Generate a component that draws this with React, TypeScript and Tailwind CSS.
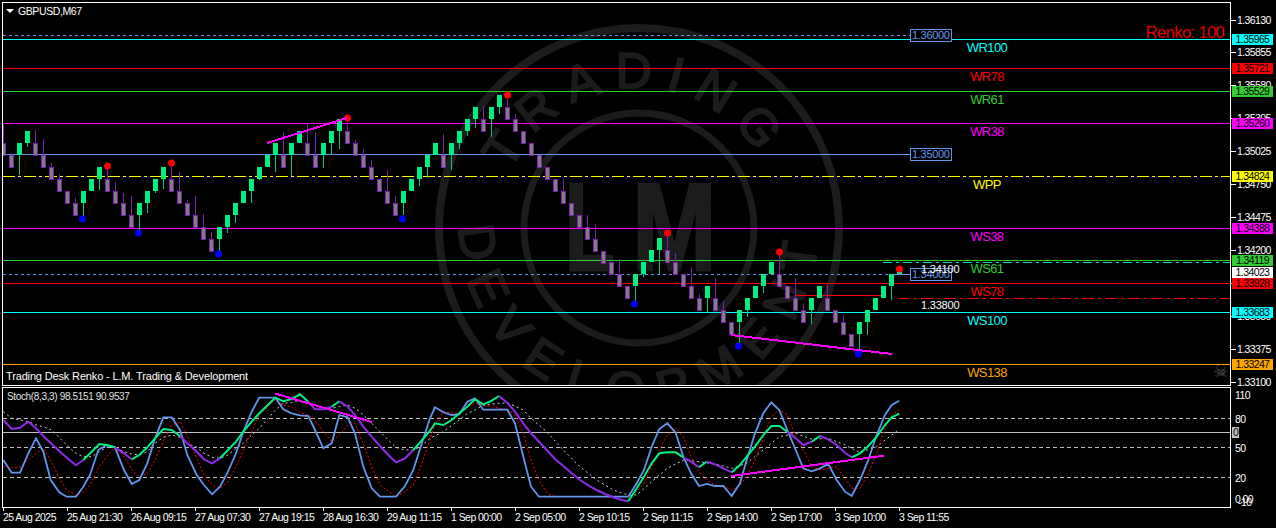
import React from "react";

const FONT = "font-['Liberation_Sans',Arial,sans-serif]";

// [kind, body top, wick end]
type Brick = ["g" | "x", number, number?];

const bricks: Brick[] = [
  ["x", 143, 123], ["x", 155, 153], ["g", 143, 175], ["g", 131, 147], ["x", 143, 130], ["x", 155, 139], ["x", 167, 163], ["x", 179, 174],
  ["x", 191], ["x", 203, 198], ["g", 191, 216], ["g", 179], ["g", 167, 190], ["x", 179, 166], ["x", 191, 182], ["x", 203, 193],
  ["x", 215, 196], ["g", 203, 230], ["g", 191, 213], ["g", 179, 193], ["g", 167, 189], ["x", 179, 163], ["x", 191, 172], ["x", 203, 200],
  ["x", 215, 196], ["x", 227, 214], ["x", 239, 232], ["g", 227, 252], ["g", 215, 233], ["g", 203, 223], ["g", 191], ["g", 179, 203],
  ["g", 167, 180], ["g", 155], ["g", 143, 172], ["x", 155, 132], ["g", 143, 176], ["g", 131], ["x", 143, 124], ["x", 155, 132],
  ["g", 143, 168], ["g", 131, 154], ["g", 119, 149], ["x", 131, 118], ["x", 143, 140], ["x", 155, 149], ["x", 167, 160], ["x", 179],
  ["x", 191, 170], ["x", 203, 196], ["g", 191, 215], ["g", 179], ["g", 167, 186], ["g", 155, 178], ["g", 143], ["x", 155, 134],
  ["g", 143, 170], ["g", 131, 149], ["g", 119, 136], ["g", 107, 128], ["x", 119, 106], ["g", 107, 137], ["g", 95, 114], ["x", 107, 95],
  ["x", 119, 114], ["x", 131], ["x", 143], ["x", 155], ["x", 167], ["x", 179], ["x", 191, 179], ["x", 203],
  ["x", 215], ["x", 227, 215], ["x", 239, 224], ["x", 251], ["x", 262], ["x", 274, 259], ["x", 286], ["g", 274, 301],
  ["g", 262, 277], ["g", 250], ["g", 238, 274], ["x", 250, 233], ["x", 262, 253], ["x", 274], ["x", 286, 267], ["x", 298, 294],
  ["g", 286, 312], ["x", 298, 278], ["x", 310, 301], ["x", 322], ["g", 310, 345], ["g", 298, 317], ["g", 286], ["g", 274, 293],
  ["g", 262], ["x", 274, 252], ["x", 286], ["x", 298, 278], ["x", 310, 304], ["g", 298, 324], ["g", 286], ["x", 298, 285],
  ["x", 310], ["x", 322, 315], ["x", 334], ["g", 322, 350], ["g", 310, 335], ["g", 298], ["g", 286], ["g", 274, 300],
];

const dots = [
  [107, 166, "#ff0000"], [171, 163, "#ff0000"], [347, 118, "#ff0000"], [507, 95, "#ff0000"], [667, 233, "#ff0000"], [779, 252, "#ff0000"], [899, 269, "#ff0000"],
  [82, 219, "#0000ff"], [138, 233, "#0000ff"], [218, 254, "#0000ff"], [402, 219, "#0000ff"], [634, 304, "#0000ff"], [738, 346, "#0000ff"], [858, 354, "#0000ff"],
] as const;

const levels = [
  { y: 39, color: "#00ffff", price: "1.35965", name: "WR100", ty: 52 },
  { y: 68, color: "#ff0000", price: "1.35721", name: "WR78", ty: 81 },
  { y: 91, color: "#32cd32", price: "1.35529", name: "WR61", ty: 104 },
  { y: 123, color: "#ff00ff", price: "1.35260", name: "WR38", ty: 136 },
  { y: 228, color: "#ff00ff", price: "1.34388", name: "WS38", ty: 241 },
  { y: 260, color: "#32cd32", price: "1.34119", name: "WS61", ty: 273 },
  { y: 283, color: "#ff0000", price: "1.33928", name: "WS78", ty: 296 },
  { y: 312, color: "#00ffff", price: "1.33683", name: "WS100", ty: 325 },
  { y: 364, color: "#ffa500", price: "1.33247", name: "WS138", ty: 377 },
];

const ticks: [string, number][] = [
  ["1.36130", 20], ["1.35855", 52], ["1.35580", 85], ["1.35305", 118], ["1.35025", 151], ["1.34750", 184],
  ["1.34475", 217], ["1.34200", 250], ["1.33925", 283], ["1.33650", 316], ["1.33375", 349], ["1.33100", 382],
];

const priceBoxes = [
  ...levels.map((l) => ({ y: l.y, color: l.color, price: l.price })),
  { y: 176, color: "#ffff00", price: "1.34824" },
  { y: 272, color: "#ffffff", price: "1.34023" },
];

const times = [
  "25 Aug 2025", "25 Aug 21:30", "26 Aug 09:15", "27 Aug 07:30", "27 Aug 19:15", "28 Aug 16:30", "29 Aug 11:15", "1 Sep 00:00",
  "2 Sep 05:00", "2 Sep 10:15", "2 Sep 11:15", "2 Sep 14:00", "2 Sep 17:00", "3 Sep 10:00", "3 Sep 11:55",
];

// traced from the picture at 3x, second half starts at x=430
const L = (a: number[]) => { let s = ""; for (let i = 0; i < a.length; i += 2) s += `${(a[i] / 3).toFixed(1)},${(360 + a[i + 1] / 3).toFixed(1)} `; return s; };
const R = (a: number[]) => { let s = ""; for (let i = 0; i < a.length; i += 2) s += `${(430 + a[i] / 3).toFixed(1)},${(360 + a[i + 1] / 3).toFixed(1)} `; return s; };

const blue = L([10,300,35,338,60,338,85,280,108,235,130,275,152,360,178,397,200,410,228,410,250,380,270,345,295,270,320,255,345,262,372,330,395,372,418,360,442,310,465,235,490,172,515,172,540,210,562,285,590,345,612,375,636,403,660,380,684,335,708,280,730,215,755,155,778,113,826,113,850,148,875,160,900,166,925,168,945,210,970,265,995,250,1018,165,1043,172,1065,220,1090,320,1115,385,1140,410,1188,410,1215,378,1240,330,1262,260,1290,175])
  + R([15,142,40,157,65,165,88,163,112,125,135,115,160,149,232,149,255,190,280,290,303,380,327,410,595,410,620,370,642,330,665,260,688,207,712,190,737,218,760,290,783,340,807,378,830,372,855,378,880,378,905,408,930,370,950,300,975,220,1000,160,1024,127,1048,150,1072,210,1097,270,1120,325,1145,334,1170,325,1195,312,1220,360,1245,395,1265,408,1290,360,1315,300,1340,225,1365,165,1385,135,1408,122]);

const redDots = L([10,320,35,322,60,322,85,300,108,280,130,265,152,300,178,355,200,390,228,405,250,395,270,375,295,325,320,290,345,262,372,290,395,328,418,352,442,340,465,300,490,245,515,195,540,185,562,230,590,295,612,345,636,375,660,385,684,365,708,320,730,270,755,215,778,165,826,118,850,135,875,142,900,158,925,165,945,180,970,215,995,245,1018,225,1043,195,1065,190,1090,250,1115,320,1140,375,1188,410,1215,395,1240,375,1262,320,1290,240])
  + R([15,195,40,155,65,158,88,160,112,140,135,130,160,135,232,149,255,165,280,220,303,300,327,360,352,400,375,410,595,410,620,395,642,370,665,320,688,270,712,225,737,205,760,230,783,290,807,335,830,360,855,375,880,378,905,390,930,375,950,350,975,300,1000,235,1024,170,1048,150,1072,165,1097,230,1120,270,1145,320,1170,330,1195,325,1220,320,1245,355,1265,385,1290,385,1315,340,1340,280,1365,205,1385,165,1408,150]);

const whiteDots = L([10,155,35,175,60,180,85,185,108,195,130,200,155,210,180,235,205,260,228,280,250,290,275,290,298,275,320,262,345,262,372,275,395,282,418,285,442,275,465,250,490,232,515,225,540,232,562,250,590,262,612,280,636,292,660,295,684,285,708,265,730,250,755,225,778,205,826,150,850,130,875,128,900,120,925,130,945,135,970,145,995,145,1018,140,1043,135,1065,145,1090,165,1115,190,1140,215,1165,240,1188,262,1215,270,1240,270,1262,260,1290,235])
  + R([40,215,88,180,112,160,135,150,160,135,207,130,232,128,280,150,303,175,350,215,400,270,450,320,500,360,550,390,595,405,620,405,665,365,712,325,760,300,807,305,855,312,880,318,905,325,950,310,1000,270,1048,230,1097,220,1145,238,1195,235,1245,255,1290,278,1340,260,1385,225,1408,208]);

const PURPLE = "#8f2be8";
const GREEN = "#00f080";

const signal: [string, string][] = [
  [PURPLE, L([10,180,35,207,60,203,85,185,108,205,130,228,155,252,180,275,205,297,228,316,250,300])],
  [GREEN, L([250,300,275,275,298,252,320,255,345,262])],
  [PURPLE, L([345,262,372,280,395,298])],
  [GREEN, L([395,298,418,285,442,262,465,235,490,207,515,210,540,228])],
  [PURPLE, L([540,228,562,250,590,275,612,298,636,310,660,295])],
  [GREEN, L([660,295,684,270,708,245,730,215,755,185,778,160,826,113,850,124,875,117,900,103,925,125])],
  [PURPLE, L([925,125,945,148,970,148,995,140])],
  [GREEN, L([995,140,1018,124])],
  [PURPLE, L([1018,124,1043,140,1065,165,1090,200,1115,230,1140,258,1165,285,1188,307,1215,295,1240,270])],
  [GREEN, L([1240,270,1262,245,1290,212]) + R([15,190,40,195,65,180,88,160,112,140,135,118,160,133,185,122,207,108])],
  [PURPLE, R([207,108,232,128,255,155,280,190,303,220,327,245,350,270,375,297,400,318,425,340,450,360,475,376,500,390,525,402,550,412,575,420,595,424])],
  [GREEN, R([595,424,620,385,642,350,665,310,688,280,712,277,737,277,760,292])],
  [PURPLE, R([760,292,783,305,807,322])],
  [GREEN, R([807,322,830,305])],
  [PURPLE, R([830,305,855,313,880,325,905,337])],
  [GREEN, R([905,337,930,315,950,290,975,260,1000,225,1024,198,1048,198,1072,215])],
  [PURPLE, R([1072,215,1097,235,1120,255,1145,245])],
  [GREEN, R([1145,245,1170,228])],
  [PURPLE, R([1170,228,1195,238,1220,255,1245,278,1265,292])],
  [GREEN, R([1265,292,1290,280,1315,258,1340,230,1365,195,1385,172,1408,161])],
];

const stochLabels: [string, number, string][] = [
  ["110", 395, "left-[4px]"], ["80", 419, "left-[4px]"], ["50", 448, "left-[4px]"], ["20", 478, "left-[4px]"], ["0.00", 499, "left-[4px]"], ["-10", 502, "left-[7px]"],
];

function Watermark() {
  return (
    <g fill="#1c1c1c" stroke="#1c1c1c" className="font-['Liberation_Sans',Arial,sans-serif]">
      <circle cx="639" cy="228" r="200" fill="none" strokeWidth="8" />
      <circle cx="639" cy="228" r="115" fill="none" strokeWidth="7" />
      <path id="wm-top" d="M 499 228 A 140 140 0 0 1 779 228" fill="none" stroke="none" />
      <path id="wm-bottom" d="M 460 228 A 179 179 0 0 0 818 228" fill="none" stroke="none" />
      <text fontSize="50" letterSpacing="13" textAnchor="middle" strokeWidth="2">
        <textPath href="#wm-top" startOffset="49%">TRADING</textPath>
      </text>
      <text fontSize="50" letterSpacing="17" textAnchor="middle" strokeWidth="2">
        <textPath href="#wm-bottom" startOffset="50%">DEVELOPMENT</textPath>
      </text>
      <text x="565" y="270" fontSize="124" fontWeight="700" strokeWidth="3" textLength="49" lengthAdjust="spacingAndGlyphs">L</text>
      <text x="632" y="270" fontSize="124" fontWeight="700" strokeWidth="3" textLength="84" lengthAdjust="spacingAndGlyphs">M</text>
    </g>
  );
}

function MainChart() {
  return (
    <svg viewBox="3 3 1227 382" className="block w-full h-full">
      <Watermark />

      {levels.map((l) => (
        <rect key={l.name} x="3" y={l.y} width="1227" height="1" fill={l.color} shapeRendering="crispEdges" />
      ))}
      <line x1="3" x2="1230" y1="176.5" y2="176.5" stroke="#ffff00" strokeDasharray="12 3 3 3" shapeRendering="crispEdges" />

      {/* round number lines */}
      <line x1="3" x2="910" y1="35.5" y2="35.5" stroke="#6495ed" strokeDasharray="3 3" shapeRendering="crispEdges" />
      <rect x="3" y="154" width="907" height="1" fill="#6495ed" shapeRendering="crispEdges" />
      <line x1="3" x2="891" y1="274.5" y2="274.5" stroke="#6495ed" strokeDasharray="3 3" shapeRendering="crispEdges" />
      <rect x="891" y="274" width="19" height="1" fill="#6495ed" shapeRendering="crispEdges" />
      <rect x="795" y="295" width="88" height="1" fill="#ff0000" shapeRendering="crispEdges" />
      <line x1="883" x2="1230" y1="262.5" y2="262.5" stroke="#00e0c0" strokeDasharray="9 4 3 4" shapeRendering="crispEdges" />
      <line x1="898" x2="1230" y1="298.5" y2="298.5" stroke="#ff0000" strokeDasharray="12 4 3 4" shapeRendering="crispEdges" />

      {bricks.map(([kind, top, wick], i) => {
        const cx = 3 + 8 * i;
        const up = kind === "g";
        return (
          <g key={i} shapeRendering="crispEdges">
            {wick !== undefined && (
              <rect x={cx} y={Math.min(wick, top)} width="1" height={up ? wick - top : top - wick} fill={up ? "#00c878" : "#7a1fb0"} />
            )}
            {up ? (
              <rect x={cx - 2} y={top} width="5" height="12" fill={GREEN} />
            ) : (
              <rect x={cx - 1.5} y={top + 0.5} width="4" height="12" fill="#808080" stroke="#7a1fb0" />
            )}
          </g>
        );
      })}
      <rect x="897" y="272" width="5" height="2" fill={GREEN} shapeRendering="crispEdges" />

      {dots.map(([x, y, c], i) => (
        <circle key={i} cx={x + 0.5} cy={y} r="3.5" fill={c} />
      ))}

      <line x1="267" y1="143" x2="347" y2="118" stroke="#ff00ff" strokeWidth="2" shapeRendering="crispEdges" />
      <line x1="731" y1="335" x2="892" y2="354" stroke="#ff00ff" strokeWidth="2" shapeRendering="crispEdges" />

      <g className="font-['Liberation_Sans',Arial,sans-serif]" fontSize="13" textAnchor="middle">
        {levels.map((l) => (
          <text key={l.name} x="987" y={l.ty} fill={l.color}>{l.name}</text>
        ))}
        <text x="987" y="189" fill="#ffff00">WPP</text>
        <text x="1185" y="38" fontSize="16.5" fill="#e00000">Renko: 100</text>
      </g>

      <g className="font-['Liberation_Sans',Arial,sans-serif]" fontSize="11">
        <rect x="910.5" y="29.5" width="41" height="12" fill="#000" stroke="#6495ed" shapeRendering="crispEdges" />
        <text x="912" y="39" fill="#6495ed" letterSpacing="-0.3">1.36000</text>
        <rect x="910.5" y="148.5" width="41" height="12" fill="#000" stroke="#6495ed" shapeRendering="crispEdges" />
        <text x="912" y="158" fill="#6495ed" letterSpacing="-0.3">1.35000</text>
        <rect x="910.5" y="268.5" width="41" height="12" fill="#000" stroke="#6495ed" shapeRendering="crispEdges" />
        <text x="912" y="278" fill="#6495ed" letterSpacing="-0.3">1.34000</text>
        <text x="921" y="273" fill="#fff" letterSpacing="-0.2">1.34100</text>
        <text x="921" y="309" fill="#fff" letterSpacing="-0.2">1.33800</text>
      </g>
    </svg>
  );
}

function StochChart() {
  return (
    <svg viewBox="3 388 1227 119" className="block w-full h-full">
      {[418.5, 447.5, 477.5].map((y) => (
        <line key={y} x1="3" x2="1230" y1={y} y2={y} stroke="#c0c0c0" strokeDasharray="4 3" shapeRendering="crispEdges" />
      ))}
      <rect x="3" y="432" width="1227" height="1" fill="#c0c0c0" shapeRendering="crispEdges" />
      <polyline points={whiteDots} fill="none" stroke="#d0d0d0" strokeDasharray="2 3" />
      <polyline points={redDots} fill="none" stroke="#ff0000" strokeDasharray="2 2" />
      <polyline points={blue} fill="none" stroke="#6495ed" strokeWidth="1.8" />
      {signal.map(([c, p], i) => (
        <polyline key={i} points={p} fill="none" stroke={c} strokeWidth="2" />
      ))}
      <line x1="275" y1="393.5" x2="372" y2="422" stroke="#ff00ff" strokeWidth="2" shapeRendering="crispEdges" />
      <line x1="731" y1="476" x2="884" y2="455.7" stroke="#ff00ff" strokeWidth="2" shapeRendering="crispEdges" />
    </svg>
  );
}

export default function App() {
  return (
    <div className={`${FONT} w-[1276px] h-[528px] overflow-hidden bg-black text-white text-[10.5px] leading-none tracking-[-0.6px] pl-[2px] pt-[2px]`}>
      <div className="flex">
        <div className="w-[1229px] shrink-0">
          <div className="relative h-[384px] border border-white">
            <MainChart />
            <div className="absolute left-[3px] top-[3px] flex items-center gap-[4px] text-[10.5px]">
              <span className="h-0 w-0 border-x-[4px] border-t-[4px] border-x-transparent border-t-white" />
              <span className="tracking-[-0.4px]">GBPUSD,M67</span>
            </div>
            <div className="absolute left-[3px] bottom-[3px] text-[11px] tracking-[-0.15px]">Trading Desk Renko - L.M. Trading &amp; Development</div>
            <div className="absolute right-[2px] bottom-[5px] font-['DejaVu_Sans',sans-serif] text-[17px] text-[#5a5a5a]">☠</div>
          </div>
          <div className="relative mt-px h-[121px] border border-white">
            <StochChart />
            <div className="absolute left-[4px] top-[4px] text-[10px] tracking-[-0.35px] text-[#e0e0e0]">Stoch(8,3,3) 98.5151 90.9537</div>
          </div>
          <div className="flex pl-px">
            {times.map((t) => (
              <div key={t} className="w-16 shrink-0 whitespace-nowrap">
                <div className="h-[3px] w-px bg-white" />
                <div className="mt-[1px] tracking-[-0.55px]">{t}</div>
              </div>
            ))}
          </div>
        </div>

        <div className="relative h-[505px] flex-1">
          {ticks.map(([p, y]) => (
            <div key={p} className="absolute left-0 flex items-center gap-px" style={{ top: y - 8 }}>
              <span className="h-px w-[5px] bg-white" />
              <span className="h-3 leading-3">{p}</span>
            </div>
          ))}
          {priceBoxes.map((b) => (
            <div key={b.price} className="absolute left-[1px] h-[11px] w-[41px] text-center leading-[11px] text-black" style={{ top: b.y - 7, backgroundColor: b.color }}>
              {b.price}
            </div>
          ))}
          {stochLabels.map(([t, y, left]) => (
            <div key={t} className={`absolute ${left} h-3 leading-3`} style={{ top: y - 8 }}>{t}</div>
          ))}
          <div className="absolute left-[1px] top-[425px] h-[11px] w-[7px] bg-[#c0c0c0] text-center leading-[11px] text-black">0</div>
        </div>
      </div>
    </div>
  );
}
